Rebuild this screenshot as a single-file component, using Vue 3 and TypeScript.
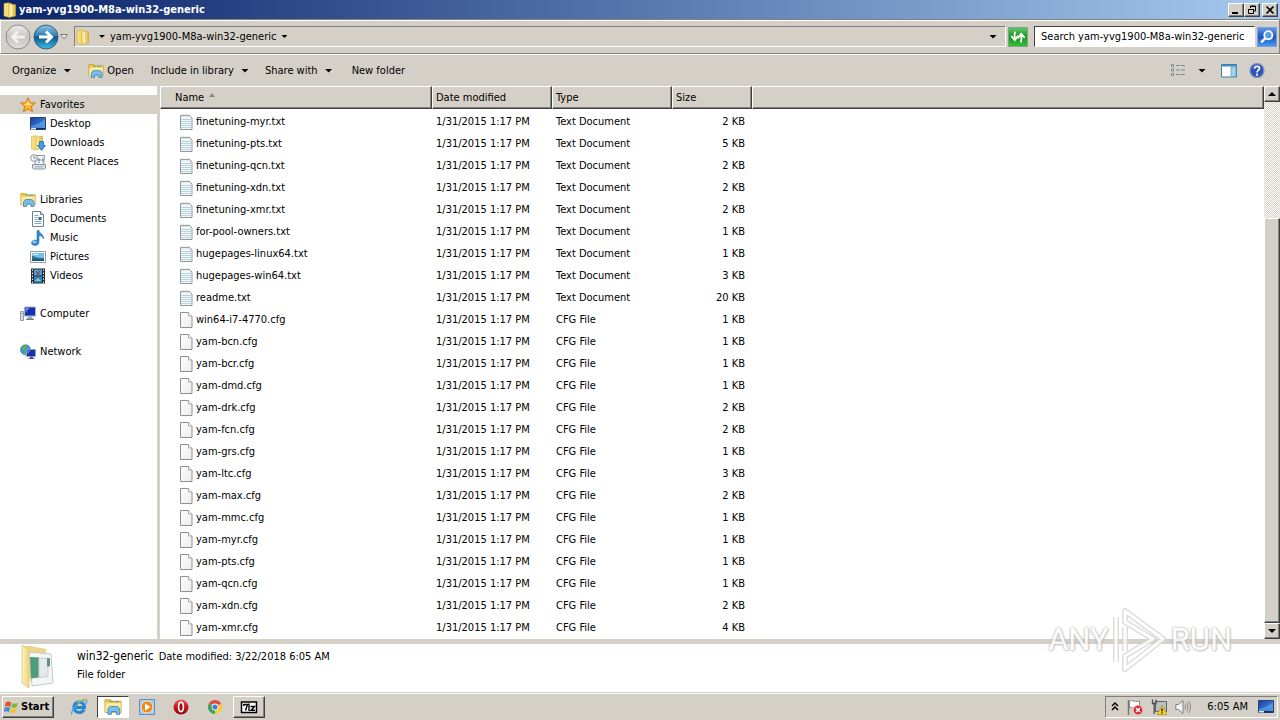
<script setup lang="ts">
import { ref } from 'vue'

interface FileRow { name: string; type: string; size: string }
interface Place { label: string; icon: string; root?: boolean; gap?: boolean; active?: boolean }

const title = 'yam-yvg1900-M8a-win32-generic'
const search = ref('')
const modified = '1/31/2015 1:17 PM'

const places: Place[] = [
  { label: 'Favorites', icon: 'star', root: true, active: true },
  { label: 'Desktop', icon: 'desktop' },
  { label: 'Downloads', icon: 'downloads' },
  { label: 'Recent Places', icon: 'recent' },
  { label: 'Libraries', icon: 'library', root: true, gap: true },
  { label: 'Documents', icon: 'document' },
  { label: 'Music', icon: 'music' },
  { label: 'Pictures', icon: 'pictures' },
  { label: 'Videos', icon: 'videos' },
  { label: 'Computer', icon: 'computer', root: true, gap: true },
  { label: 'Network', icon: 'network', root: true, gap: true },
]

const txt = (name: string, kb: number): FileRow => ({ name: name + '.txt', type: 'Text Document', size: kb + ' KB' })
const cfg = (name: string, kb: number): FileRow => ({ name: name + '.cfg', type: 'CFG File', size: kb + ' KB' })

const files: FileRow[] = [
  txt('finetuning-myr', 2), txt('finetuning-pts', 5), txt('finetuning-qcn', 2),
  txt('finetuning-xdn', 2), txt('finetuning-xmr', 2), txt('for-pool-owners', 1),
  txt('hugepages-linux64', 1), txt('hugepages-win64', 3), txt('readme', 20),
  cfg('win64-i7-4770', 1), cfg('yam-bcn', 1), cfg('yam-bcr', 1), cfg('yam-dmd', 1),
  cfg('yam-drk', 2), cfg('yam-fcn', 2), cfg('yam-grs', 1), cfg('yam-ltc', 3),
  cfg('yam-max', 2), cfg('yam-mmc', 1), cfg('yam-myr', 1), cfg('yam-pts', 1),
  cfg('yam-qcn', 1), cfg('yam-xdn', 2), cfg('yam-xmr', 4),
]
</script>

<template>
  <div class="window">
    <svg class="defs" aria-hidden="true">
      <defs>
        <linearGradient id="gold" x1="0" x2="1"><stop offset="0" stop-color="#fdf3b0" /><stop offset="1" stop-color="#e2b93e" /></linearGradient>
        <linearGradient id="pale" x1="0" x2="1"><stop offset="0" stop-color="#fdf4c4" /><stop offset="1" stop-color="#ecd27c" /></linearGradient>
        <linearGradient id="screen" x1="0" y1="0" x2="1" y2="1"><stop offset="0" stop-color="#1b3f9c" /><stop offset=".6" stop-color="#2f74cf" /><stop offset="1" stop-color="#7db8ef" /></linearGradient>
        <linearGradient id="glass" x1="0" y1="0" x2="0" y2="1"><stop offset="0" stop-color="#8fc3e2" /><stop offset=".45" stop-color="#2f7fb4" /><stop offset=".5" stop-color="#0c5488" /><stop offset="1" stop-color="#3fc0ea" /></linearGradient>
        <linearGradient id="silver" x1="0" y1="0" x2="0" y2="1"><stop offset="0" stop-color="#eeeeec" /><stop offset=".5" stop-color="#c6c4c0" /><stop offset="1" stop-color="#e0dfdc" /></linearGradient>
        <linearGradient id="page" x1="0" y1="0" x2="1" y2="1"><stop offset="0" stop-color="#ffffff" /><stop offset="1" stop-color="#ececec" /></linearGradient>
        <linearGradient id="red" x1="0" y1="0" x2="0" y2="1"><stop offset="0" stop-color="#f0625c" /><stop offset=".5" stop-color="#c8141a" /><stop offset="1" stop-color="#8c0a10" /></linearGradient>
      </defs>
      <symbol id="folder" viewBox="0 0 16 16">
        <path d="M2 1.500l5-.8v14.600L2 14z" fill="#f7dc78" stroke="#d9b23a" stroke-width=".6" />
        <path d="M6.500 2.500L9 1l1 1.500h3.500v11.500L7 15.500z" fill="url(#gold)" stroke="#cfa430" stroke-width=".6" />
        <path d="M9.500 2.800V14" stroke="#fff6c4" />
      </symbol>
      <symbol id="star" viewBox="0 0 16 16">
        <path d="M8 .8l2.100 4.900 5.200.4-4 3.400 1.300 5.300L8 11.900l-4.600 2.900 1.300-5.300-4-3.400 5.200-.4z" fill="#fbb52c" stroke="#d97a10" />
        <path d="M8 3.200l1.300 3.500 3.300.3-4.600 1.600-4.600-1.600 3.300-.3z" fill="#ffe58a" />
      </symbol>
      <symbol id="desktop" viewBox="0 0 16 16">
        <path d="M.5 1.500h15v12H.500z" fill="url(#screen)" stroke="#24427c" />
        <path d="M1 10c5-1 9-3 14-7V8c-5 3-9 4-14 4z" fill="#5f9fe4" opacity=".7" />
        <path d="M1 12h5v1.500H1z" fill="#dcebfa" /><path d="M6 12h9v1.500H6z" fill="#16305e" />
      </symbol>
      <symbol id="downloads" viewBox="0 0 16 16">
        <path d="M1.500 1.500l5-1v14.500l-5-1z" fill="#f7dc78" stroke="#d9b23a" stroke-width=".6" />
        <path d="M6 2.500l3-1h3.500v11L6 15z" fill="url(#gold)" stroke="#cfa430" stroke-width=".6" />
        <path d="M9.500 6.500h4v4h2l-4 5-4-5h2z" fill="#3f9be6" stroke="#1d68b4" stroke-width=".8" />
      </symbol>
      <symbol id="recent" viewBox="0 0 16 16">
        <path d="M5.500 1.500h9l-1 11H5z" fill="#eef1f4" stroke="#8a959f" />
        <path d="M2.500 10.500h13v3.500l-1 1h-11l-1-1z" fill="#dce1e6" stroke="#8a959f" />
        <path d="M8 5h2v2H8zm4 0h1.500v2H12zM8 8.500h2M5 12.800h8" fill="#6e93b8" stroke="#8ba0b4" stroke-width=".8" />
        <circle cx="4" cy="4" r="3.300" fill="#f7f9fb" stroke="#8a959f" /><path d="M4 2v2.200h1.700" fill="none" stroke="#587089" stroke-width=".8" />
      </symbol>
      <symbol id="library" viewBox="0 0 16 16">
        <path d="M.8 1.500h5l1 1.300h8.400v10H.800z" fill="#eec650" stroke="#c99d2a" stroke-width=".7" />
        <path d="M1.300 4.500h13.500v8H1.300z" fill="#fbeaa0" />
        <path d="M5 3h3" stroke="#6bb04b" /><path d="M9 3.300h4" stroke="#58a5dc" />
        <path d="M3.500 14.500V11c0-2.500 1.500-3.500 3-3.500h4c2 0 3.500 1 3.500 3.500v3.500h-3V12H6.500v2.500z" fill="#79bdea" stroke="#3a83bd" stroke-width=".8" />
      </symbol>
      <symbol id="document" viewBox="0 0 16 16">
        <path d="M2.500.5h8l3 3v12h-11z" fill="#fff" stroke="#6d8195" /><path d="M10.500.500v3h3" fill="#cfdeec" stroke="#6d8195" />
        <path d="M4.500 4.500h4M4.500 6.500h3M4.500 8.500h3M4.500 10.500h7M4.500 12.500h7" stroke="#8ca3bd" /><path d="M8.500 6h3v3h-3z" fill="#315e9c" />
      </symbol>
      <symbol id="music" viewBox="0 0 16 16">
        <path d="M7 .5h2c.5 3 5 3.500 4.500 8.500-.5-2-2.500-3.300-4.500-3.500v6.500C9 14.500 7 15.500 5 15.500S1.500 14.300 1.500 13 3 10 5 10c.8 0 1.500.1 2 .4z" fill="#2f8ad2" stroke="#1a67ac" stroke-width=".5" />
        <ellipse cx="4.500" cy="12" rx="2" ry="1.200" fill="#8fd0f6" />
      </symbol>
      <symbol id="pictures" viewBox="0 0 16 16">
        <path d="M.5 2.500h15v11H.500z" fill="#fff" stroke="#8b9cab" /><path d="M2 4h12v8H2z" fill="#72c1ea" />
        <path d="M2 7c3 0 5 2.500 12 2v3H2z" fill="#2d7386" /><path d="M2 10.500h12V12H2z" fill="#1d4d7a" /><path d="M3 5.500h5" stroke="#e0f4fd" />
      </symbol>
      <symbol id="videos" viewBox="0 0 16 16">
        <path d="M1 .5h14v15H1z" fill="#252b33" /><path d="M4 1.500h8v6H4z" fill="#4b9fd4" /><path d="M4 8.500h8v6H4z" fill="#3a83b8" />
        <path d="M6 3.500l4 3M9.500 3L7 7" stroke="#9b3c28" /><path d="M5 13l3-3 3 3z" fill="#7dd0e6" />
        <path d="M2.500 1.500v14M13.500 1.500v14" stroke="#e3e7ea" stroke-dasharray="1.500 1.500" />
      </symbol>
      <symbol id="computer" viewBox="0 0 16 16">
        <path d="M.5 5.500h3v9h-3z" fill="#d4dadd" stroke="#7d8a90" stroke-width=".8" /><path d="M1.500 7.500h1" stroke="#3c9a3c" />
        <path d="M4.500 1h11v9h-11z" fill="#1a2fae" stroke="#a9b4c4" /><path d="M5.500 2h4l-4 5z" fill="#5f88ec" />
        <path d="M8 10.500h4l1 2.500H7z" fill="#9aa5b5" /><path d="M6 13.500h8" stroke="#6f7b8d" />
      </symbol>
      <symbol id="network" viewBox="0 0 16 16">
        <circle cx="5.500" cy="5.800" r="5" fill="#3b9bd7" stroke="#2168a5" stroke-width=".6" />
        <path d="M2 3c2-2 4-2 5-1L5.500 5 3 6zM4 7l3 1-1 2.500-2-1z" fill="#59b544" />
        <path d="M6.500 5.500h9v7h-9z" fill="#1a2fae" stroke="#94a2b8" /><path d="M7.500 6.500h3l-3 4z" fill="#5f88ec" />
        <path d="M10 12.500h3v1.500h1.500v1h-6v-1H10z" fill="#4b607c" />
      </symbol>
      <symbol id="file-txt" viewBox="0 0 16 16">
        <path d="M2.500 1.500h9l2.500 2.500v11.500H2.500z" fill="#f3f8fa" stroke="#8d999f" />
        <path d="M3.500 .5v2M5.500 .5v2M7.500 .5v2M9.500 .5v2M11.500 .5v2" stroke="#a9b0b3" stroke-width=".8" />
        <path d="M3 5.500h10.500M3 7.500h10.500M3 9.500h10.500M3 11.500h10.500M3 13.500h10.500" stroke="#b9d2dc" />
      </symbol>
      <symbol id="file-cfg" viewBox="0 0 16 16">
        <path d="M2.500.5h8l3.500 3.500v11.500H2.500z" fill="url(#page)" stroke="#8f8f8f" /><path d="M10.500.500v3.500H14" fill="#fff" stroke="#a8a8a8" />
      </symbol>
    </svg>

    <header class="titlebar">
      <svg class="ico"><use href="#folder" /></svg>
      <h1>{{ title }}</h1>
      <div class="caption">
        <button type="button" class="raised" aria-label="Minimize"><svg viewBox="0 0 12 10"><path d="M2 8h6" stroke="#000" stroke-width="2" /></svg></button>
        <button type="button" class="raised" aria-label="Restore"><svg viewBox="0 0 12 10"><path d="M4.500 3V1h5v5H8M4 1.500h6M2.500 4.500h5v4h-5zM2 4.500h6" fill="none" stroke="#000" /></svg></button>
        <button type="button" class="raised close" aria-label="Close"><svg viewBox="0 0 12 10"><path d="M2.500 1.500l7 7M9.500 1.500l-7 7" stroke="#000" stroke-width="1.600" /></svg></button>
      </div>
    </header>

    <nav class="navbar" aria-label="Address">
      <button type="button" class="round" aria-label="Back"><svg viewBox="0 0 26 26"><circle cx="13" cy="13" r="12" fill="url(#silver)" stroke="#8c8c8a" /><path d="M20 13H8M13 7.500L7.500 13l5.500 5.500" fill="none" stroke="#f1f1ef" stroke-width="3" /></svg></button>
      <button type="button" class="round" aria-label="Forward"><svg viewBox="0 0 26 26"><circle cx="13" cy="13" r="12" fill="url(#glass)" stroke="#3a6280" /><path d="M6 13h12M13 7.500l5.500 5.500-5.500 5.500" fill="none" stroke="#fff" stroke-width="3" /></svg></button>
      <button type="button" class="recent" aria-label="Recent pages"><svg viewBox="0 0 8 6"><path d="M.5.500h7L4 5z" fill="#eee" stroke="#7b7b78" /></svg></button>
      <div class="address">
        <svg class="ico"><use href="#folder" /></svg>
        <button type="button" class="crumb" aria-label="Locations"><i class="tri" /></button>
        <button type="button" class="crumb">{{ title }}<i class="tri" /></button>
        <button type="button" class="history" aria-label="Previous locations"><i class="tri big" /></button>
      </div>
      <button type="button" class="refresh" aria-label="Refresh"><svg viewBox="0 0 20 20"><path d="M7 4C6 6 6 8 6.500 12M2.500 9l4 4.500 3.500-5M13 16c1-2 1-4 .5-8M9.500 11.500l4-5 4 4.500" fill="none" stroke="#fff" stroke-width="2" /></svg></button>
      <input v-model="search" class="search" type="text" :placeholder="'Search ' + title" :aria-label="'Search ' + title">
      <button type="button" class="go" aria-label="Search"><svg viewBox="0 0 20 20"><circle cx="11.500" cy="8" r="4.500" fill="#5b9be8" stroke="#fff" stroke-width="2" /><path d="M8 11.500L3.500 16" stroke="#fff" stroke-width="2.600" /></svg></button>
    </nav>

    <div class="toolbar">
      <button type="button" class="organize">Organize<i class="tri big" /></button>
      <button type="button" class="open"><svg class="ico"><use href="#library" /></svg>Open</button>
      <button type="button" class="include">Include in library<i class="tri big" /></button>
      <button type="button" class="share">Share with<i class="tri big" /></button>
      <button type="button">New folder</button>
      <div class="tools">
        <button type="button" aria-label="Change your view"><svg class="ico" viewBox="0 0 16 16"><path d="M1.500 1.500h2v2h-2zM1.500 6h2v2h-2zM1.500 10.500h2v2h-2z" fill="#fff" stroke="#76828d" /><path d="M6 2.500h4M11 2.500h4M6 7h4M11 7h4M6 11.500h4M11 11.500h4" stroke="#7488a0" /></svg></button>
        <button type="button" aria-label="More options"><i class="tri big" /></button>
        <button type="button" aria-label="Show the preview pane"><svg class="ico" viewBox="0 0 16 16"><path d="M.500 1.500h15v12.500H.500z" fill="#fff" stroke="#3a82a8" /><path d="M1 2h14v1.500H1z" fill="#3f8fb8" /><path d="M10 4h5v9.500h-5z" fill="#9fd4ee" stroke="#5d9fc2" stroke-width=".8" /></svg></button>
        <button type="button" aria-label="Get help"><svg class="ico" viewBox="0 0 16 16"><circle cx="8" cy="7.500" r="7" fill="#2f55b8" stroke="#8395bb" stroke-width="1.400" /><path d="M5.500 5.800C5.500 4 6.600 3.300 8 3.300s2.500.8 2.500 2.200C10.500 7.200 8 7.300 8 9.500" fill="none" stroke="#fff" stroke-width="1.700" /><circle cx="8" cy="11.700" r="1.100" fill="#fff" /></svg></button>
      </div>
    </div>

    <main class="body">
      <aside class="sidebar">
        <ul>
          <li v-for="p in places" :key="p.label" :class="{ root: p.root, gap: p.gap, active: p.active }">
            <a href="#"><svg class="ico"><use :href="'#' + p.icon" /></svg><span>{{ p.label }}</span></a>
          </li>
        </ul>
      </aside>
      <section class="list">
        <table>
          <colgroup><col class="c-name"><col class="c-date"><col class="c-type"><col class="c-size"><col></colgroup>
          <thead>
            <tr>
              <th class="first">Name<svg class="sort" viewBox="0 0 6 4"><path d="M0 4l3-4 3 4z" fill="#8b8882" /></svg></th>
              <th>Date modified</th><th>Type</th><th>Size</th><th />
            </tr>
          </thead>
          <tbody>
            <tr v-for="f in files" :key="f.name">
              <td class="name"><div><svg class="ico"><use :href="f.type === 'CFG File' ? '#file-cfg' : '#file-txt'" /></svg><span>{{ f.name }}</span></div></td>
              <td>{{ modified }}</td>
              <td>{{ f.type }}</td>
              <td class="size">{{ f.size }}</td>
              <td />
            </tr>
          </tbody>
        </table>
      </section>
      <div class="scroll">
        <button type="button" class="raised" aria-label="Scroll up"><i class="tri big up" /></button>
        <div class="track" />
        <div class="thumb raised" />
        <button type="button" class="raised" aria-label="Scroll down"><i class="tri big" /></button>
      </div>
    </main>

    <footer class="details">
      <svg class="preview" viewBox="0 0 36 46">
        <path d="M2 2l9 0 15 3v6L10 38z" fill="#ead58a" />
        <path d="M9 8l22 2 2 29-21 3z" fill="#f4f6f6" stroke="#c4caca" />
        <path d="M10 13l9 .5v20l-8 1z" fill="#4f9c7c" /><path d="M19 14l9 .5v18l-9 1z" fill="#e4e9ec" stroke="#c7ced2" /><path d="M27 14l3 .3v8l-3 .2z" fill="#668c7a" />
        <path d="M2 1l7 5v38l-7-5z" fill="url(#pale)" stroke="#e6cf7c" />
      </svg>
      <div class="info">
        <p><span class="item">win32-generic</span><span>Date modified:</span> <span>3/22/2018 6:05 AM</span></p>
        <p>File folder</p>
      </div>
      <div class="watermark" aria-hidden="true">
        <span>ANY</span>
        <svg viewBox="0 0 54 66"><path d="M3 10v45M12 4v11l28 17-28 17v13l38-30zM12 20v24" fill="none" stroke="#d5d5d5" stroke-width="6" stroke-linejoin="round" /><path d="M3 10v45M12 4v11l28 17-28 17v13l38-30zM12 20v24" fill="none" stroke="#fff" stroke-width="3" stroke-linejoin="round" /></svg>
        <span>RUN</span>
      </div>
    </footer>

    <div class="taskbar">
      <button type="button" class="start raised"><svg viewBox="0 0 18 18"><path d="M2 4c2.500-1.500 4-1.500 6 0L7 9C5 7.500 3 7.500 1 9z" fill="#e8502c" /><path d="M9 4.500c2 1.200 4 1.200 6.500-.2L14.300 9c-2.300 1.300-4 1.300-6.100 0z" fill="#7fb93a" /><path d="M.8 10c2-1.400 4-1.400 6 0l-1.200 5c-2-1.500-4-1.500-6 0z" fill="#3c8ed8" /><path d="M8 10.200c2 1.300 4 1.300 6.100 0l-1.200 4.600c-2.200 1.400-4 1.400-6.100 0z" fill="#f8c22c" /></svg>Start</button>
      <div class="tasks">
        <button type="button" aria-label="Internet Explorer"><svg viewBox="0 0 18 18"><path d="M14 11.500A5.300 5.300 0 1 1 14.500 9.500H6" fill="none" stroke="#2386d2" stroke-width="3" /><path d="M2 16.500C-.5 13 12 .5 16 2c1 .5.800 2 0 3.500" fill="none" stroke="#4da3de" stroke-width="1.400" /><path d="M7 5C11 2 15 .5 16.500 2" fill="none" stroke="#e4b428" stroke-width="1.200" /></svg></button>
        <button type="button" class="pressed" aria-label="Windows Explorer"><svg><use href="#library" /></svg></button>
        <button type="button" aria-label="Media Player"><svg viewBox="0 0 18 18"><path d="M1.500 1.500h15v15h-15z" fill="#a4cdf0" stroke="#5590c8" /><circle cx="9" cy="9" r="6" fill="#ef8a1c" stroke="#fff3dc" stroke-width=".8" /><path d="M7 5.500L12.500 9 7 12.500z" fill="#fff" /></svg></button>
        <button type="button" aria-label="Opera"><svg viewBox="0 0 18 18"><circle cx="9" cy="9" r="7.500" fill="url(#red)" /><ellipse cx="9" cy="9" rx="2.400" ry="4.600" fill="#a80c12" stroke="#fff" stroke-width="1.600" /></svg></button>
        <button type="button" aria-label="Chrome"><svg viewBox="0 0 18 18"><path d="M9 9L2.900 5.500A7 7 0 0 1 15.100 5.500z" fill="#e24a3b" /><path d="M9 9L2.900 5.500A7 7 0 0 0 9 16z" fill="#3ba757" /><path d="M9 9l6.100-3.500A7 7 0 0 1 9 16z" fill="#f7cb35" /><circle cx="9" cy="9" r="3.400" fill="#fff" /><circle cx="9" cy="9" r="2.600" fill="#3f7de0" /></svg></button>
        <button type="button" class="raised" aria-label="7-Zip"><svg viewBox="0 0 18 18"><path d="M1.500 4h15v10.500h-15z" fill="#fff" stroke="#000" stroke-width="1.500" /><path d="M3.500 6.500h4L5.500 12.500M3.800 6v2M9 5.500v7.500M10.500 8.500h4l-3.500 3.800h4" fill="none" stroke="#000" stroke-width="1.400" /></svg></button>
      </div>
      <div class="tray">
        <button type="button" aria-label="Show hidden icons"><svg class="chev" viewBox="0 0 8 12"><path d="M1 5l3-3 3 3M1 9l3-3 3 3" fill="none" stroke="#000" stroke-width="1.500" /></svg></button>
        <button type="button" aria-label="Action Center"><svg class="ico" viewBox="0 0 16 16"><path d="M1.500 1v15" stroke="#777" stroke-width="1.500" /><path d="M2.500 2c3-1.500 4 1.500 10 0v7c-6 1.500-7-1.500-10 0z" fill="#fff" stroke="#858585" /><circle cx="11" cy="11" r="4.700" fill="#d8252c" stroke="#f5b8ba" stroke-width=".8" /><path d="M9 9l4 4M13 9l-4 4" stroke="#fff" stroke-width="1.600" /></svg></button>
        <button type="button" aria-label="Network status"><svg class="ico" viewBox="0 0 16 16"><path d="M4.500 2.500h11v10h-11z" fill="#b8c0c6" stroke="#5b6369" /><path d="M1.500.500v4h3.500v-4M3.200 4.500V15" fill="none" stroke="#4d4d4d" stroke-width="1.300" /><path d="M11 6.500l4.800 9H6.200z" fill="#ffd928" stroke="#b69411" stroke-width=".8" /><path d="M11 9.500v3M11 13.300v1.200" stroke="#000" stroke-width="1.300" /></svg></button>
        <button type="button" aria-label="Volume"><svg class="ico" viewBox="0 0 16 16"><path d="M.8 5.500h2.700L8 1.500v13l-4.500-4H.800z" fill="#f5f5f5" stroke="#808080" /><path d="M9.800 5.500q1.600 2.500 0 5M11.800 3.800q2.600 4.200 0 8.400M13.700 2q3.600 6 0 12" fill="none" stroke="#8a8a8a" /></svg></button>
        <time>6:05 AM</time>
        <button type="button" aria-label="Show desktop"><svg class="ico"><use href="#desktop" /></svg></button>
      </div>
    </div>
  </div>
</template>

<style>
body { margin: 0; background: #d4d0c8; }
</style>

<style scoped>
* { box-sizing: border-box; }
.window { display: flex; flex-direction: column; min-height: 100vh; background: #d4d0c8; color: #000; font: 11px/14px "DejaVu Sans Condensed", "DejaVu Sans", sans-serif; }
.defs { position: absolute; width: 0; height: 0; }
.ico { width: 16px; height: 16px; flex: none; display: block; }
button { font: inherit; color: inherit; background: none; border: 0; padding: 0; display: flex; align-items: center; white-space: nowrap; }
h1, p, ul { margin: 0; padding: 0; }
li { list-style: none; }
a { color: inherit; text-decoration: none; }
.raised { background: #d4d0c8; border: 1px solid; border-color: #fff #404040 #404040 #fff; box-shadow: inset -1px -1px #808080; }
.tri { width: 6px; height: 3px; background: #000; clip-path: polygon(0 0, 100% 0, 50% 100%); flex: none; }
.tri.big { width: 8px; height: 4px; }
.tri.up { clip-path: polygon(0 100%, 100% 100%, 50% 0); }

.titlebar { height: 19px; display: flex; align-items: center; gap: 1px; padding: 0 2px; background: linear-gradient(90deg, #0a246a, #a6caf0); color: #fff; }
.titlebar h1 { font-size: 11px; line-height: 16px; font-weight: bold; flex: 1; }
.caption { display: flex; }
.caption button { width: 16px; height: 14px; justify-content: center; }
.caption .close { margin-left: 2px; }
.caption svg { width: 12px; height: 10px; }

.navbar { height: 35px; display: flex; align-items: center; padding: 0 2px 0 4px; border: 1px solid; border-color: #808080 #808080 #808080 #fff; box-shadow: inset 0 1px #fff; }
.round { margin-right: 2px; }
.round:nth-of-type(2) { margin-right: 1px; }
.round svg { width: 26px; height: 26px; }
.recent svg { width: 8px; height: 6px; }
.recent { margin-right: 6px; }
.address { flex: 1; height: 21px; display: flex; align-items: center; border: 1px solid; border-color: #808080 #fff #fff #808080; margin-right: 2px; }
.address .crumb:nth-of-type(1) { padding: 0 5px 0 8px; }
.crumb .tri { margin-left: 5px; }
.crumb:nth-of-type(1) .tri { margin-left: 0; }
.history { margin-left: auto; padding: 0 8px; }
.refresh, .go { width: 20px; height: 20px; border: 1px solid #80a688; background: linear-gradient(#5fc568, #169420 50%, #35bd3c); flex: none; }
.go { border-color: #7d9fd8; background: linear-gradient(#5f97ea, #1d50c4 50%, #4a9af0); }
.refresh svg, .go svg { width: 18px; height: 18px; }
.search { width: 221px; height: 21px; margin: 0 2px 0 6px; padding: 0 6px; border: 1px solid; border-color: #404040 #fff #fff #404040; border-radius: 0; font: inherit; background: #fff; outline: 0; }
.search::placeholder { color: #000; opacity: 1; }

.toolbar { height: 32px; display: flex; align-items: center; padding: 0 15px 0 12px; border-top: 1px solid #fff; }
.toolbar .tri { margin-left: 7px; }
.organize { margin-right: 17px; }
.open { gap: 3px; margin-right: 17px; }
.include { margin-right: 16px; }
.share { margin-right: 19px; }
.tools { margin-left: auto; display: flex; align-items: center; }
.tools .tri { margin: 0 15px 0 12px; }
.tools button:nth-child(3) { margin-right: 12px; }

.body { flex: 1; display: flex; background: #fff; }
.sidebar { width: 160px; flex: none; padding-top: 9px; border-right: 3px solid #d4d0c8; }
.sidebar a { display: flex; align-items: center; height: 19px; gap: 4px; padding-left: 30px; }
.sidebar .root a { padding-left: 20px; }
.sidebar .gap { margin-top: 19px; }
.sidebar .active { background: #d4d0c8; }
.list { flex: 1; min-width: 0; }
table { width: 100%; table-layout: fixed; border-collapse: separate; border-spacing: 0; }
.c-name { width: 272px; }
.c-date, .c-type { width: 120px; }
.c-size { width: 80px; }
th { height: 23px; padding: 0 3px; text-align: left; font-weight: normal; background: #d4d0c8; border: 1px solid; border-color: #fff #404040 #404040 #fff; box-shadow: inset -1px -1px #808080; }
th.first { padding-left: 14px; }
.sort { width: 6px; height: 4px; margin: 0 0 4px 5px; }
td { height: 22px; padding: 0 4px; }
tbody::before { content: ""; display: block; height: 2px; }
td.size { text-align: right; padding-right: 7px; }
td.name { padding-left: 18px; }
.name div { display: flex; align-items: center; gap: 2px; }

.scroll { width: 16px; display: flex; flex-direction: column; background: repeating-conic-gradient(#d4d0c8 0 25%, #fff 0 50%) 0 0 / 2px 2px; }
.scroll button { height: 16px; flex: none; justify-content: center; }
.track { flex: 116; }
.thumb { flex: 405; }

.details { border-top: 5px solid #d4d0c8; background: #fff; height: 53px; display: flex; padding: 0 48px 0 20px; position: relative; }
.preview { width: 36px; height: 46px; margin-right: 21px; }
.details p { line-height: 18px; }
.info { padding-top: 3px; }
.item { font-size: 12px; margin-right: 5px; }
.watermark { position: absolute; right: 48px; bottom: 19px; display: flex; align-items: center; gap: 4px; opacity: .8; color: #fff; font: 31px/40px Roboto, "Liberation Sans", sans-serif; text-shadow: 0 0 3px #aaa, 0 0 2px #bbb, 1px 1px 2px #ccc; }
.watermark svg { width: 54px; height: 66px; }

.taskbar { height: 28px; display: flex; align-items: center; padding: 0 2px; border-top: 1px solid #d4d0c8; box-shadow: inset 0 1px #fff; }
.start { height: 22px; width: 52px; gap: 1px; padding-left: 1px; font-weight: bold; }
.start svg { width: 16px; height: 18px; flex: none; }
.tasks { display: flex; margin-left: 9px; gap: 2px; }
.tasks button { width: 32px; height: 22px; justify-content: center; }
.tasks svg { width: 18px; height: 18px; }
.tasks .pressed { background: #fff; border: 1px solid; border-color: #404040 #fff #fff #404040; }
.tray { margin-left: auto; height: 22px; display: flex; align-items: center; gap: 8px; padding: 0 3px 0 5px; border: 1px solid; border-color: #808080 #fff #fff #808080; }
.tray time { margin: 0 2px 0 8px; }
.chev { width: 8px; height: 12px; }
</style>
